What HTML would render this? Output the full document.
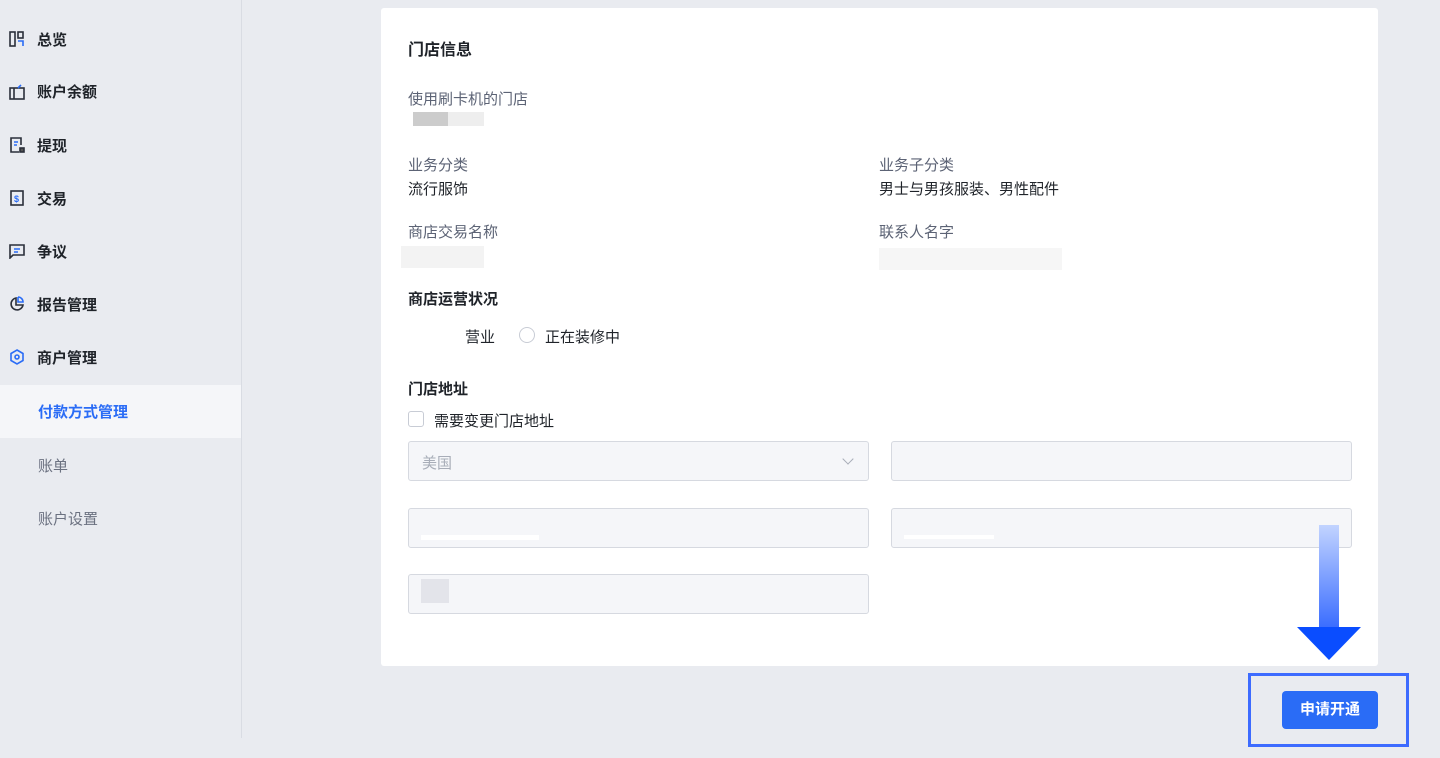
<!DOCTYPE html><html><head><meta charset="utf-8"><style>
body{margin:0;width:1440px;height:758px;background:#e9ebf0;font-family:"Liberation Sans","Noto Sans CJK SC",sans-serif;position:relative;overflow:hidden;color:#1f2329}
.a{position:absolute}
.side{left:0;top:0;width:241px;height:738px;border-right:1px solid #d9dce3}
.mi{position:absolute;left:37px;font-size:15px;font-weight:bold;color:#1f2329}
.ic{position:absolute;left:9px;width:16px;height:16px}
.sub{position:absolute;left:38px;font-size:15px;color:#6b7180}
.card{left:381px;top:8px;width:997px;height:658px;background:#fff;border-radius:3px}
.lbl{position:absolute;font-size:15px;color:#5c6375}
.val{position:absolute;font-size:15px;color:#1f2329}
.h{position:absolute;font-size:15px;font-weight:bold;color:#1f2329}
.inp{position:absolute;height:40px;background:#f5f6f9;border:1px solid #d6d9e0;border-radius:3px;box-sizing:border-box}
</style></head><body>
<div class="a side">
<svg class="ic" style="top:31px" viewBox="0 0 16 16" fill="none" stroke="#2a2f3a" stroke-width="1.6"><rect x="1" y="1" width="5" height="14"/><rect x="9" y="1" width="5" height="6"/><path d="M9 10h5v5" stroke="#2a6cf6"/></svg><div class="mi" style="top:29px">总览</div>
<svg class="ic" style="top:84px" viewBox="0 0 16 16" fill="none" stroke="#2a2f3a" stroke-width="1.6"><rect x="1" y="4" width="14" height="11"/><path d="M5 4v11"/><path d="M9 4l3-3" stroke="#2a6cf6"/></svg><div class="mi" style="top:81px">账户余额</div>
<svg class="ic" style="top:137px" viewBox="0 0 16 16" fill="none" stroke="#2a2f3a" stroke-width="1.6"><path d="M12 8V1H2v14h8"/><path d="M5 5h4M5 8h3" stroke="#2a6cf6"/><rect x="11" y="11" width="4" height="4" fill="#555"/></svg><div class="mi" style="top:135px">提现</div>
<svg class="ic" style="top:190px" viewBox="0 0 16 16" fill="none" stroke="#2a2f3a" stroke-width="1.6"><rect x="2" y="1" width="12" height="14"/><text x="5" y="12" font-size="9" fill="#2a6cf6" stroke="none" font-weight="bold">$</text></svg><div class="mi" style="top:188px">交易</div>
<svg class="ic" style="top:243px" viewBox="0 0 16 16" fill="none" stroke="#2a2f3a" stroke-width="1.6"><path d="M1 15V2h14v10H4z"/><path d="M5 6h6M5 9h4" stroke="#2a6cf6"/></svg><div class="mi" style="top:241px">争议</div>
<svg class="ic" style="top:296px" viewBox="0 0 16 16" fill="none" stroke="#2a2f3a" stroke-width="1.6"><path d="M7 2a6 6 0 1 0 7 7H7z"/><path d="M9 1v5h5a5 5 0 0 0-5-5" stroke="#2a6cf6"/></svg><div class="mi" style="top:294px">报告管理</div>
<svg class="ic" style="top:349px" viewBox="0 0 16 16" fill="none" stroke="#2a6cf6" stroke-width="1.6"><path d="M8 1l6 3.5v7L8 15l-6-3.5v-7z"/><circle cx="8" cy="8" r="2"/></svg><div class="mi" style="top:347px">商户管理</div>
<div class="a" style="left:0;top:385px;width:241px;height:53px;background:#f5f6f9"></div>
<div class="sub" style="top:401px;color:#2a6cf6;font-weight:bold">付款方式管理</div>
<div class="sub" style="top:455px">账单</div>
<div class="sub" style="top:508px">账户设置</div>
</div>
<div class="a card">
<div class="h" style="left:27px;top:28px;font-size:16px">门店信息</div>
<div class="lbl" style="left:27px;top:80px">使用刷卡机的门店</div>
<div class="a" style="left:32px;top:104px;width:35px;height:14px;background:#ccc"></div><div class="a" style="left:67px;top:104px;width:36px;height:14px;background:#eee"></div>
<div class="lbl" style="left:27px;top:146px">业务分类</div><div class="val" style="left:27px;top:170px">流行服饰</div>
<div class="lbl" style="left:498px;top:146px">业务子分类</div><div class="val" style="left:498px;top:170px">男士与男孩服装、男性配件</div>
<div class="lbl" style="left:27px;top:213px">商店交易名称</div><div class="a" style="left:20px;top:238px;width:83px;height:22px;background:#f3f3f3"></div>
<div class="lbl" style="left:498px;top:213px">联系人名字</div><div class="a" style="left:498px;top:240px;width:183px;height:22px;background:#f6f6f6"></div>
<div class="h" style="left:27px;top:280px">商店运营状况</div>
<div class="val" style="left:84px;top:318px">营业</div>
<div class="a" style="left:138px;top:319px;width:14px;height:14px;border:1.5px solid #c8ccd5;border-radius:50%"></div>
<div class="val" style="left:164px;top:318px">正在装修中</div>
<div class="h" style="left:27px;top:370px">门店地址</div>
<div class="a" style="left:27px;top:403px;width:14px;height:14px;border:1.5px solid #c8ccd5;border-radius:3px"></div>
<div class="val" style="left:53px;top:402px">需要变更门店地址</div>
<div class="inp" style="left:27px;top:433px;width:461px"><span class="a" style="left:13px;top:10px;font-size:15px;color:#a8adb8">美国</span><span class="a" style="right:16px;top:13px;width:7px;height:7px;border-right:1.3px solid #a8adb8;border-bottom:1.3px solid #a8adb8;transform:rotate(45deg)"></span></div>
<div class="inp" style="left:510px;top:433px;width:461px"></div>
<div class="inp" style="left:27px;top:500px;width:461px"><span class="a" style="left:12px;top:26px;width:118px;height:5px;background:#fff"></span></div>
<div class="inp" style="left:510px;top:500px;width:461px"><span class="a" style="left:12px;top:26px;width:90px;height:4px;background:#fff"></span></div>
<div class="inp" style="left:27px;top:566px;width:461px"><span class="a" style="left:12px;top:4px;width:28px;height:24px;background:#e3e4ea"></span></div>
</div>
<div class="a" style="left:1319px;top:525px;width:20px;height:103px;background:linear-gradient(#c2d4ff,#3a6dff)"></div>
<svg class="a" style="left:1297px;top:627px" width="64" height="33"><polygon points="0,0 64,0 32,33" fill="#0a4dff"/></svg>
<div class="a" style="left:1248px;top:673px;width:155px;height:68px;border:3px solid #3d6bff"></div>
<div class="a" style="left:1282px;top:691px;width:96px;height:38px;background:#2a6cf6;border-radius:4px;color:#fff;font-size:15px;font-weight:bold;text-align:center;line-height:38px">申请开通</div>
</body></html>
